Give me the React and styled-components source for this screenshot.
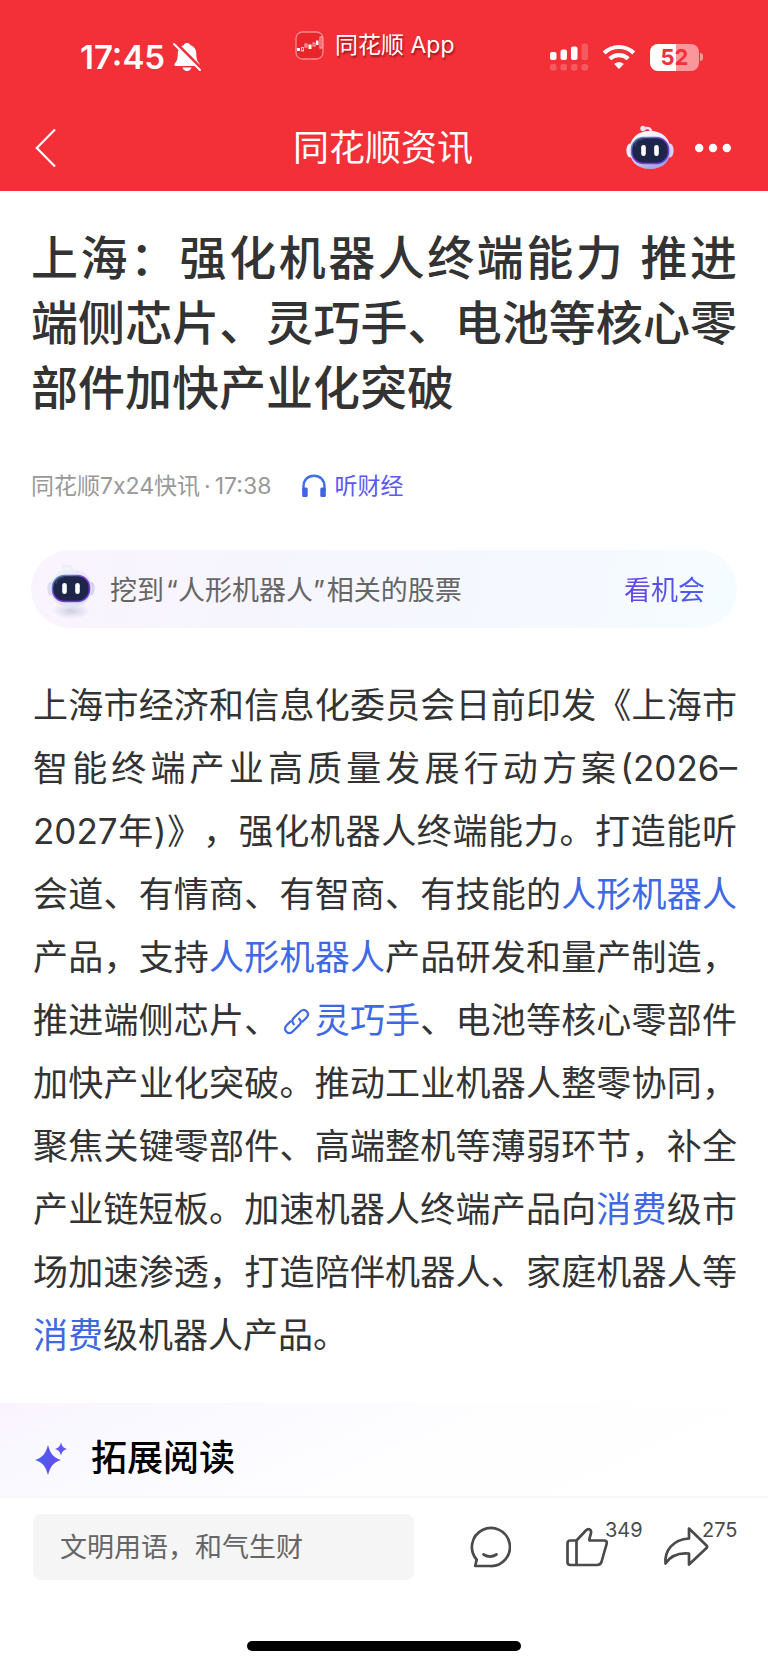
import React, { useState } from 'react';
import styled, { createGlobalStyle } from 'styled-components';

const GlobalStyle = createGlobalStyle`
  * {
    box-sizing: border-box;
  }
  body {
    margin: 0;
    background: #fff;
    font-family: Inter, 'Noto Sans CJK SC', sans-serif;
    color: #333;
  }
  button {
    padding: 0;
    border: 0;
    background: none;
    font: inherit;
    color: inherit;
    cursor: pointer;
  }
  svg {
    display: block;
    flex: none;
  }
`;

const Page = styled.div`
  min-height: 100vh;
  display: flex;
  flex-direction: column;
`;

const Header = styled.header`
  background: #f33038;
  color: #fff;
`;
const StatusBar = styled.div`
  display: grid;
  grid-template-columns: 215px auto 1fr;
  height: 105px;
  padding: 30px 65px 0 80px;
`;
const StatusGroup = styled.div`
  display: flex;
  align-items: center;
  justify-content: ${({ $end }) => $end ? 'flex-end' : 'flex-start'};
  gap: ${({ $end }) => $end ? '14px' : '8px'};
  height: 54px;
`;
const Clock = styled.time`
  font-size: 33px;
  line-height: 40px;
  font-weight: 600;
`;
const AppLabel = styled.div`
  display: flex;
  align-items: center;
  gap: 11px;
  height: 30px;
  font-size: 23px;
  line-height: 30px;
  text-shadow: 1px 2px 2px rgba(90, 0, 0, 0.6);
`;

const NavBar = styled.nav`
  display: grid;
  grid-template-columns: 1fr auto 1fr;
  align-items: center;
  height: 86px;
  padding: 0 37px 0 35px;
`;
const NavTitle = styled.div`
  font-size: 36px;
  line-height: 48px;
`;
const NavActions = styled.div`
  display: flex;
  justify-content: flex-end;
  align-items: center;
  gap: 21px;
`;
const IconButton = styled.button`
  display: flex;
  align-items: center;
`;

const Article = styled.main`
  padding: 34px 31px 36px;
`;
const Title = styled.h1`
  margin: 0;
  font-size: 47px;
  line-height: 65px;
  font-weight: 500;
  text-align: justify;
  text-spacing-trim: space-all;
`;
const Meta = styled.div`
  display: flex;
  align-items: center;
  gap: 30px;
  margin-top: 48px;
  font-size: 23px;
  line-height: 36px;
  color: #999;
`;
const Separator = styled.span`
  margin: 0 4px;
`;
const ListenButton = styled.button`
  display: flex;
  align-items: center;
  gap: 7px;
  color: #5a5af0;
`;

const StockPill = styled.a`
  display: flex;
  align-items: center;
  height: 78px;
  margin-top: 46px;
  padding: 3px 32px 0 16px;
  border-radius: 39px;
  background: linear-gradient(100deg, #faf4fe 0%, #f6f5fe 30%, #f5f8ff 70%, #f5fcff 100%);
  font-size: 27px;
  line-height: 40px;
  color: #666;
  text-decoration: none;
`;
const PillText = styled.span`
  flex: 1;
  padding-left: 15px;
`;
const Topic = styled.span`
  margin: 0 2px;
`;
const PillAction = styled.span`
  background: linear-gradient(90deg, #6845e2, #4a5cf0);
  background-clip: text;
  color: transparent;
`;

const Body = styled.p`
  margin: 46px 0 0;
  padding-left: 2px;
  font-size: 35px;
  line-height: 63px;
  text-align: justify;
  text-spacing-trim: space-all;
`;
const Keyword = styled.a`
  color: #3f68e4;
  text-decoration: none;

  svg {
    display: inline-block;
    vertical-align: -2px;
    margin: 0 4px;
  }
`;

const Related = styled.section`
  display: flex;
  align-items: center;
  gap: 23px;
  height: 93px;
  padding: 16px 34px 0;
  background: linear-gradient(155deg, #fbf3ff 0%, #f9f8ff 14%, #fefeff 55%, #fff 100%);
`;
const RelatedTitle = styled.h2`
  margin: 0;
  font-size: 36px;
  line-height: 48px;
  font-weight: 500;
  color: #000;
`;

const Footer = styled.footer`
  margin-top: auto;
  border-top: 2px solid #f6f6f7;
  padding-bottom: 16px;
`;
const CommentBar = styled.div`
  display: flex;
  align-items: center;
  gap: 55px;
  padding: 16px 63px 0 33px;
`;
const CommentInput = styled.input`
  flex: 1;
  min-width: 0;
  height: 66px;
  padding: 0 27px;
  border: 0;
  border-radius: 8px;
  background: #f5f5f5;
  font: inherit;
  font-size: 27px;
  color: #333;

  &::placeholder {
    color: #666;
    opacity: 1;
  }
`;
const ActionButton = styled.button`
  position: relative;
  width: 42px;
  height: 42px;
  color: #4a4a4a;
`;
const Count = styled.span`
  position: absolute;
  left: 39px;
  top: -8px;
  font-size: 20px;
  line-height: 24px;
`;
const HomeIndicator = styled.div`
  width: 274px;
  height: 10px;
  margin: 61px auto 0;
  border-radius: 5px;
  background: #000;
`;

const BellOff = () => (
  <svg width="28" height="30" viewBox="0 0 28 30">
    <g fill="#fff">
      <path d="M14 1c2 0 3 1 3.400 2.300C21.500 4.500 23.300 8 23.300 12c0 5 1 7 3 9.500.9 1.200.4 2.500-1 2.500H3c-1.600 0-2.100-1.300-1.200-2.500 2-2.500 3-4.500 3-9.500 0-4 1.800-7.500 5.800-8.700C11 2 12 1 14 1z" />
      <path d="M9.500 25.500h9c-.5 2.200-2.300 3.500-4.500 3.500s-4-1.300-4.500-3.500z" />
    </g>
    <path d="M2.500.5l26 26" stroke="#f33038" strokeWidth="3" />
    <path d="M1 2l26 26" stroke="#fff" strokeWidth="2" strokeLinecap="round" />
  </svg>
);

const AppLogo = () => (
  <svg width="29" height="29" viewBox="0 0 29 29">
    <rect x="1" y="1" width="27" height="27" rx="6.500" fill="#e8262b" stroke="#fa8a8c" strokeWidth="1.300" />
    <g fill="#fff">
      <rect x="2" y="17" width="3" height="3" />
      <rect x="13.500" y="13.500" width="3" height="4.500" />
      <rect x="21" y="9.500" width="2.500" height="4.500" />
    </g>
    <g fill="none" stroke="#fbb" strokeWidth="1">
      <rect x="6.500" y="16.500" width="2" height="3.500" />
      <rect x="10" y="13" width="2" height="3" />
      <rect x="18" y="12" width="2" height="3" />
      <rect x="25" y="6" width="2" height="11" />
    </g>
  </svg>
);

const Signal = () => (
  <svg width="38" height="28" viewBox="0 0 38 28" fill="#fff">
    <rect x="0" y="9" width="6.500" height="8" rx="2" />
    <rect x="10.500" y="6.500" width="6.500" height="10.500" rx="2" />
    <rect x="21" y="3.500" width="6.500" height="13.500" rx="2" />
    <g opacity="0.200">
      <rect x="31.500" y="0.500" width="6.500" height="16.500" rx="2" />
      <rect x="0" y="21" width="6.500" height="6.500" rx="2" />
      <rect x="10.500" y="21" width="6.500" height="6.500" rx="2" />
      <rect x="21" y="21" width="6.500" height="6.500" rx="2" />
      <rect x="31.500" y="21" width="6.500" height="6.500" rx="2" />
    </g>
  </svg>
);

const Wifi = () => (
  <svg width="34" height="26" viewBox="0 0 34 26" fill="none" stroke="#fff" strokeWidth="4.200">
    <path d="M2.200 9C10.500 1 23.500 1 31.800 9" />
    <path d="M7.800 14.700c5.200-4.900 13.200-4.900 18.400 0" />
    <path d="M17 25l-4.800-4.900c2.800-2.500 6.800-2.500 9.600 0z" fill="#fff" stroke="none" />
  </svg>
);

const BatteryShell = styled.div`
  display: flex;
  align-items: center;
  gap: 1px;

  &::after {
    content: '';
    width: 3px;
    height: 8px;
    border-radius: 0 4px 4px 0;
    background: #f9979b;
  }
`;
const BatteryLevel = styled.div`
  width: 49px;
  height: 27px;
  border-radius: 8px;
  background: linear-gradient(90deg, #fff 53%, #f9979b 53%);
  font-size: 22px;
  line-height: 27px;
  font-weight: 700;
  text-align: center;
  color: #f33038;
`;

const BackArrow = () => (
  <svg width="22" height="40" viewBox="0 0 22 40" fill="none" stroke="#fff" strokeWidth="2.200">
    <path d="M20 1.500L1.800 20 20 38.500" />
  </svg>
);

const Dots = () => (
  <svg width="36" height="10" viewBox="0 0 36 10" fill="#fff">
    <circle cx="4.200" cy="5" r="4.200" />
    <circle cx="18" cy="5" r="4.200" />
    <circle cx="31.800" cy="5" r="4.200" />
  </svg>
);

const Robot = ({ id, pale }) => (
  <svg width="48" height={pale ? 60 : 46} viewBox={pale ? '0 -2 48 60' : '0 0 48 46'}>
    <defs>
      <linearGradient id={`${id}-head`} x1="0" y1="0" x2="0.400" y2="1">
        <stop offset="0" stopColor={pale ? '#f3f3fd' : '#ffffff'} />
        <stop offset="0.600" stopColor="#e3e3f8" />
        <stop offset="1" stopColor={pale ? '#e2e2f6' : '#a9a8e6'} />
      </linearGradient>
      <linearGradient id={`${id}-rim`} x1="0" y1="0" x2="1" y2="1">
        <stop offset="0" stopColor="#4e9fc0" />
        <stop offset="0.500" stopColor="#8a35e0" />
        <stop offset="1" stopColor="#5a40e0" />
      </linearGradient>
      <radialGradient id={`${id}-shadow`}>
        <stop offset="0" stopColor="#cfd0e4" />
        <stop offset="1" stopColor="#cfd0e4" stopOpacity="0" />
      </radialGradient>
    </defs>
    {pale && <ellipse cx="24" cy="48" rx="19" ry="8" fill={`url(#${id}-shadow)`} />}
    <path d="M17 4c4-2 8-1.500 8.500 4" fill="none" stroke={pale ? '#ededf8' : '#e6dff2'} strokeWidth="2.500" />
    <circle cx="17" cy="3.500" r="2.700" fill={pale ? '#f0f0fa' : '#e6dff2'} />
    <ellipse cx="4" cy="25.500" rx="3.600" ry="7" fill={pale ? '#dcdcf8' : '#eeecfb'} />
    <ellipse cx="44" cy="25.500" rx="3.600" ry="7" fill="#d5d3f5" />
    <path d="M24 6c13 0 20.500 8 20.500 19S37 44 24 44 3.500 36 3.500 25 11 6 24 6z" fill={`url(#${id}-head)`} />
    <rect x="5.500" y="12.500" width="37" height="26" rx="12" fill="#1d2649" stroke={`url(#${id}-rim)`} strokeWidth="1.600" />
    <path d="M9 21c1-5 4-7 8-7" fill="none" stroke="#4a5376" strokeWidth="1.500" opacity="0.600" />
    <rect x="15.200" y="20" width="4.600" height="11" rx="2.300" fill="#fff" />
    <rect x="28.200" y="20" width="4.600" height="11" rx="2.300" fill="#fff" />
  </svg>
);

const Headphones = () => (
  <svg width="26" height="24" viewBox="0 0 26 24">
    <path d="M2.500 17v-4.500C2.500 6 7 1.700 13 1.700S23.500 6 23.500 12.500V17" fill="none" stroke="#4070e4" strokeWidth="2.400" />
    <rect x="1.200" y="13.500" width="5.500" height="9.500" rx="1.500" fill="#4064e0" />
    <rect x="19.300" y="13.500" width="5.500" height="9.500" rx="1.500" fill="#4064e0" />
  </svg>
);

const ChainLink = () => (
  <svg width="27" height="27" viewBox="0 0 27 27" fill="none" stroke="currentColor" strokeWidth="2.200" strokeLinecap="round">
    <path d="M10.800 16.300c-2-2-1.900-4.500 0-6.400l6.400-6.400c2-2 4.600-2 6.400-.2s1.800 4.400-.2 6.400l-4 4" />
    <path d="M16.200 10.700c2 2 1.900 4.500 0 6.400l-6.400 6.400c-2 2-4.600 2-6.400.2s-1.800-4.400.2-6.400l4-4" />
  </svg>
);

const Sparkle = () => (
  <svg width="34" height="34" viewBox="0 0 34 34">
    <defs>
      <linearGradient id="sparkle" x1="0" y1="0" x2="1" y2="0.600">
        <stop offset="0" stopColor="#3f68ea" />
        <stop offset="1" stopColor="#6a48f0" />
      </linearGradient>
    </defs>
    <path d="M14 4c2.300 8 5 12.700 13 15-8 2.300-10.700 7-13 15C11.700 26 9 21.300 1 19 9 16.700 11.700 12 14 4z" fill="url(#sparkle)" />
    <path d="M27 1.500c1.200 4 2.300 5.200 6 6.500-3.700 1.300-4.800 2.500-6 6.500-1.200-4-2.300-5.200-6-6.500 3.700-1.300 4.800-2.500 6-6.500z" fill="#6258ee" />
  </svg>
);

const CommentIcon = () => (
  <svg width="42" height="42" viewBox="0 0 42 42" fill="none" stroke="currentColor" strokeWidth="2.700" strokeLinejoin="round" strokeLinecap="round">
    <path d="M21 40H6.200l1.500-6.400A19 19 0 1 1 21 40z" />
    <path d="M14.500 28.500c4 2.500 9 2.500 13 0" />
  </svg>
);

const LikeIcon = () => (
  <svg width="42" height="42" viewBox="0 0 42 42" fill="none" stroke="currentColor" strokeWidth="2.700" strokeLinejoin="round">
    <path d="M10.500 14.500H4.300A2.800 2.800 0 0 0 1.500 17.300v19A2.800 2.800 0 0 0 4.300 39H31c2.500 0 4-1.200 4.600-3.500l5-17.500c.6-2.200-.4-3.500-2.600-3.500H24.300c-1 0-1.200-.6-.9-1.600l1.500-5.600c1-3.800-2.400-5.300-5-2.800l-9.400 10z" />
    <path d="M10.500 14.500V39" />
  </svg>
);

const ShareIcon = () => (
  <svg width="46" height="42" viewBox="0 0 46 42" fill="none" stroke="currentColor" strokeWidth="2.700" strokeLinejoin="round">
    <path d="M26 2.500L43.500 19.500c.9.900.9 1.700 0 2.600L26 38.500V27.500c-11.500-1-19 3-23.500 10C1.500 25 9.500 13.500 26 12.500z" />
  </svg>
);

export default function App() {

  const [comment, setComment] = useState('');

  return (
    <>
      <GlobalStyle />
      <Page>
        <Header>
          <StatusBar>
            <StatusGroup>
              <Clock>17:45</Clock>
              <BellOff />
            </StatusGroup>
            <AppLabel>
              <AppLogo />
              <span>同花顺 App</span>
            </AppLabel>
            <StatusGroup $end>
              <Signal />
              <Wifi />
              <BatteryShell>
                <BatteryLevel>52</BatteryLevel>
              </BatteryShell>
            </StatusGroup>
          </StatusBar>
          <NavBar>
            <IconButton type="button" aria-label="返回"><BackArrow /></IconButton>
            <NavTitle>同花顺资讯</NavTitle>
            <NavActions>
              <IconButton type="button" aria-label="智能助手"><Robot id="nav-bot" /></IconButton>
              <IconButton type="button" aria-label="更多"><Dots /></IconButton>
            </NavActions>
          </NavBar>
        </Header>

        <Article>
          <Title>上海：强化机器人终端能力 推进端侧芯片、灵巧手、电池等核心零部件加快产业化突破</Title>
          <Meta>
            <span>同花顺7x24快讯<Separator>·</Separator>17:38</span>
            <ListenButton type="button">
              <Headphones />
              听财经
            </ListenButton>
          </Meta>
          <StockPill href="#stocks">
            <Robot id="pill-bot" pale />
            <PillText>挖到<Topic>“人形机器人”</Topic>相关的股票</PillText>
            <PillAction>看机会</PillAction>
          </StockPill>
          <Body>
            上海市经济和信息化委员会日前印发《上海市智能终端产业高质量发展行动方案(2026–2027年)》，强化机器人终端能力。打造能听会道、有情商、有智商、有技能的<Keyword href="#humanoid">人形机器人</Keyword>产品，支持<Keyword href="#humanoid">人形机器人</Keyword>产品研发和量产制造，推进端侧芯片、<Keyword href="#hand"><ChainLink />灵巧手</Keyword>、电池等核心零部件加快产业化突破。推动工业机器人整零协同，聚焦关键零部件、高端整机等薄弱环节，补全产业链短板。加速机器人终端产品向<Keyword href="#consumer">消费</Keyword>级市场加速渗透，打造陪伴机器人、家庭机器人等<Keyword href="#consumer">消费</Keyword>级机器人产品。
          </Body>
        </Article>

        <Related>
          <Sparkle />
          <RelatedTitle>拓展阅读</RelatedTitle>
        </Related>

        <Footer>
          <CommentBar>
            <CommentInput
              type="text"
              aria-label="发表评论"
              placeholder="文明用语，和气生财"
              value={comment}
              onChange={(e) => setComment(e.target.value)}
            />
            <ActionButton type="button" aria-label="评论"><CommentIcon /></ActionButton>
            <ActionButton type="button" aria-label="点赞">
              <LikeIcon />
              <Count>349</Count>
            </ActionButton>
            <ActionButton type="button" aria-label="分享">
              <ShareIcon />
              <Count>275</Count>
            </ActionButton>
          </CommentBar>
          <HomeIndicator />
        </Footer>
      </Page>
    </>
  );
}
